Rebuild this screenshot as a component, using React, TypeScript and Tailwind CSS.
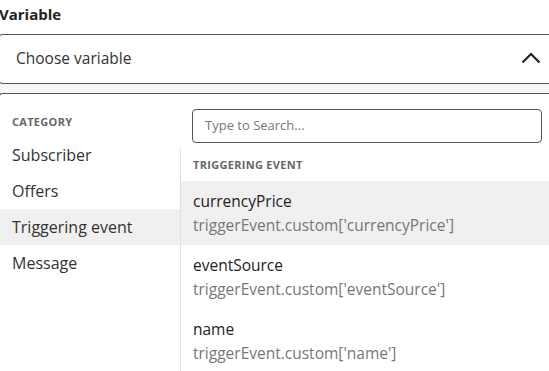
const categories = ["Subscriber", "Offers", "Triggering event", "Message"];

const events = [
  { name: "currencyPrice", path: "triggerEvent.custom['currencyPrice']" },
  { name: "eventSource", path: "triggerEvent.custom['eventSource']" },
  { name: "name", path: "triggerEvent.custom['name']" },
];

const App = () => {
  const selected = "Triggering event";

  return (
    <div className="h-[371px] w-[549px] overflow-hidden bg-white font-['Open_Sans',sans-serif] text-[#2b2b2b]">
      <div className="-ml-[1px] w-[560px]">
        <label className="block pt-[5px] text-[15px] font-bold leading-[18px] text-[#222]">
          Variable
        </label>

        <div className="mt-[11px] flex h-[50px] items-center justify-between rounded-[3px] border border-[#555] bg-white pl-[16px] pr-[17px]">
          <span className="text-[15.5px] text-[#333]">Choose variable</span>
          <svg width="20" height="12" viewBox="0 0 20 12" fill="none" className="mt-[-2px]">
            <polyline points="1.5,10.5 10,2 18.5,10.5" stroke="#222" strokeWidth="2.2" />
          </svg>
        </div>

        <div className="h-[9px] bg-[#f7f7f7]" />

        <div className="rounded-t-[3px] border-t border-l border-[#555] bg-white">
          <div className="flex">
            <div className="w-[180px] shrink-0 pt-[20px]">
              <div className="pl-[12px] text-[11px] font-bold uppercase leading-[16px] tracking-[0.3px] text-[#666]">
                Category
              </div>
              <ul className="mt-[7px]">
                {categories.map((c) => (
                  <li
                    key={c}
                    className={`flex h-[36px] items-center pl-[12px] text-[16px] text-[#333] ${
                      c === selected ? "bg-[#f0f0f0]" : ""
                    }`}
                  >
                    {c}
                  </li>
                ))}
              </ul>
            </div>

            <div className="flex-1 pt-[15px]">
              <div className="-ml-[180px] pl-[192px] pr-[17px]">
                <div className="flex h-[34px] items-center rounded-[4px] border border-[#555] px-[12px] text-[13px] text-[#777]">
                  Type to Search...
                </div>
              </div>
              <div className="mt-[5px] border-l border-[#e2e2e2]">
                <div className="pl-[12px] pt-[9px] pb-[8px] text-[11px] font-bold uppercase leading-[16px] tracking-[0.3px] text-[#666]">
                  Triggering event
                </div>
                {events.map((e, i) => (
                  <div
                    key={e.name}
                    className={`flex h-[64px] flex-col justify-center pl-[12px] ${
                      i === 0 ? "bg-[#f0f0f0]" : ""
                    }`}
                  >
                    <div className="text-[15.5px] leading-[24px] text-[#222]">{e.name}</div>
                    <div className="text-[15.5px] leading-[24px] text-[#777]">{e.path}</div>
                  </div>
                ))}
              </div>
            </div>
          </div>
        </div>
      </div>
    </div>
  );
};

export default App;
